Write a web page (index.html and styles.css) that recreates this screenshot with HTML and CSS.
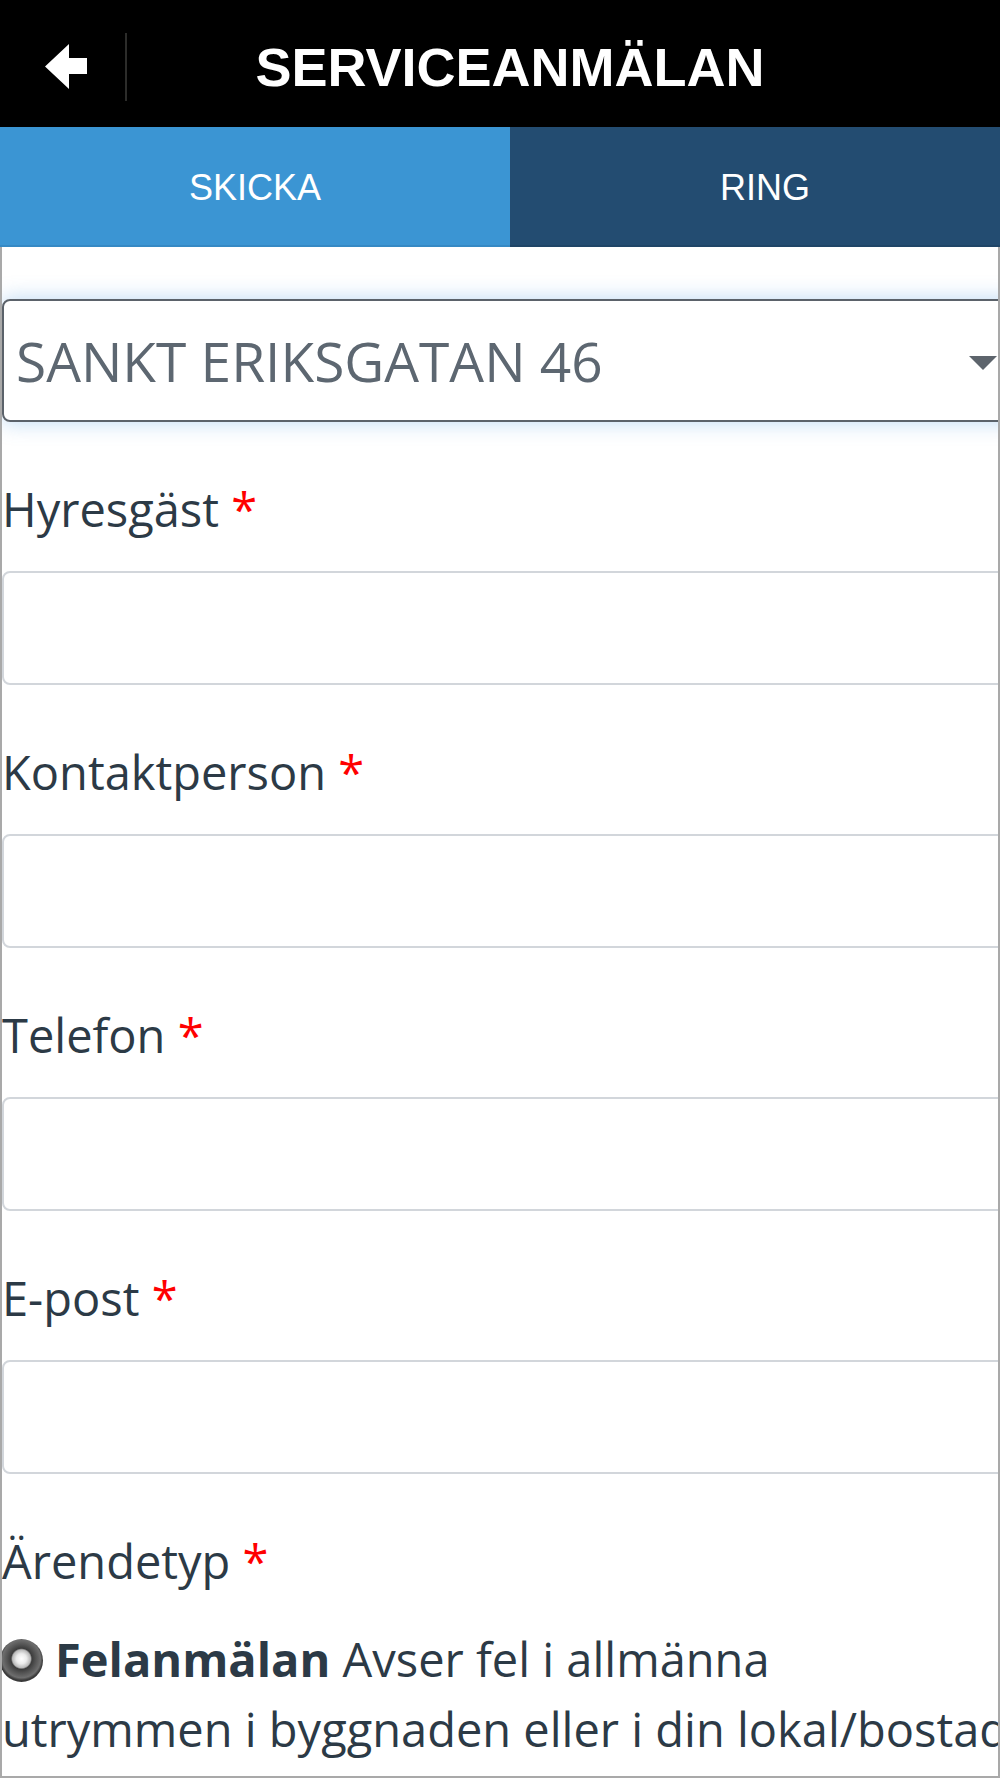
FILE: index.html
```html
<!DOCTYPE html>
<html lang="sv">
<head>
    <meta charset="UTF-8">
    <meta name="viewport" content="width=device-width, initial-scale=1.0">
    <title>Serviceanmälan</title>
    <link rel="stylesheet" href="styles.css">
</head>
<body>
<div class="screen">
    <header class="topbar">
        <div class="topbar-left">
            <a class="back" href="#">
                <svg width="42" height="45" viewBox="0 0 42 45">
                    <polygon points="0,22.5 24,0 24,14 42,14 42,30 24,30 24,45" fill="#fff"/>
                </svg>
            </a>
            <span class="divider"></span>
        </div>
        <h1>SERVICEANMÄLAN</h1>
        <div></div>
    </header>

    <nav class="tabs">
        <a class="tab active" href="#">SKICKA</a>
        <a class="tab" href="#">RING</a>
    </nav>

    <div class="webview">
        <form class="form">
            <!-- fastighet -->
            <div class="select">
                <span>SANKT ERIKSGATAN 46</span>
                <span class="caret"></span>
            </div>

            <div class="field">
                <label for="hyresgast">Hyresgäst <span class="req">*</span></label>
                <input type="text" id="hyresgast">
            </div>
            <div class="field">
                <label for="kontakt">Kontaktperson <span class="req">*</span></label>
                <input type="text" id="kontakt">
            </div>
            <div class="field">
                <label for="telefon">Telefon <span class="req">*</span></label>
                <input type="tel" id="telefon">
            </div>
            <div class="field">
                <label for="epost">E-post <span class="req">*</span></label>
                <input type="email" id="epost">
            </div>

            <div class="field">
                <label>Ärendetyp <span class="req">*</span></label>
                <p class="option"><span class="radio"></span><b>Felanmälan</b> Avser fel i allmänna utrymmen i byggnaden eller i din <span class="nowrap">lokal/bostad</span></p>
            </div>
        </form>
    </div>
</div>
</body>
</html>
```

FILE: styles.css
```css
body {
    margin: 0;
    background-color: #fff;
}
.screen {
    width: 1000px;
    height: 1778px;
    overflow: hidden;
    display: flex;
    flex-direction: column;
}
/* Svart toppfält */
.topbar {
    flex: none;
    width: 1020px;
    height: 127px;
    box-sizing: border-box;
    padding-top: 6px;
    background-color: #000;
    display: grid;
    grid-template-columns: 1fr auto 1fr;
    align-items: center;
}
.topbar-left {
    display: flex;
    align-items: center;
    padding-left: 45px;
}
.back {
    display: flex;
}
.divider {
    width: 2px;
    height: 68px;
    margin-left: 38px;
    background-color: #2c2c2a;
}
.topbar h1 {
    margin: 0;
    color: #fff;
    font-family: "Liberation Sans", Arial, sans-serif;
    font-weight: bold;
    font-size: 54px;
    line-height: normal;
}
/* Flikar */
.tabs {
    flex: none;
    width: 1020px;
    height: 120px;
    display: flex;
}
.tab {
    flex: 1;
    display: flex;
    align-items: center;
    justify-content: center;
    box-sizing: border-box;
    padding-top: 4px;
    background-color: #234c71;
    border-bottom: 2px solid #1f4567;
    color: #fff;
    font-family: "Liberation Sans", Arial, sans-serif;
    font-size: 36px;
    text-decoration: none;
}
.tab.active {
    background-color: #3b95d3;
    border-bottom-color: #3589c4;
}
/* Formulärytan */
.webview {
    flex: 1;
    min-height: 0;
    box-sizing: border-box;
    border: 2px solid #a9a9a9;
    border-top: none;
    overflow: hidden;
    background-color: #fff;
}
.form {
    width: 1018px;
    padding-top: 52px;
    font-family: "Open Sans", "Noto Sans", sans-serif;
    color: #2c3a46;
}
.select {
    height: 123px;
    box-sizing: border-box;
    display: flex;
    align-items: center;
    justify-content: space-between;
    padding: 0 21px 0 12px;
    border: 2px solid #5b626a;
    border-radius: 8px;
    box-shadow: 0 0 20px 2px rgba(90, 160, 225, 0.35);
    color: #5d6771;
    font-size: 55px;
}
.caret {
    width: 0;
    height: 0;
    margin-top: 4px;
    border-left: 14px solid transparent;
    border-right: 14px solid transparent;
    border-top: 14px solid #5d646c;
}
.field {
    margin-top: 55px;
}
.field label {
    display: block;
    font-size: 47px;
    line-height: 64px;
}
.req {
    color: #ff0000;
}
.field input {
    display: block;
    width: 100%;
    height: 114px;
    box-sizing: border-box;
    margin: 30px 0 0;
    border: 2px solid #d2d6db;
    border-radius: 8px;
    background-color: #fff;
}
/* Radioknapp */
.option {
    width: 1010px;
    margin: 31px 0 0;
    font-size: 47px;
    line-height: 70px;
}
.option b {
    font-weight: bold;
}
.radio {
    display: inline-block;
    width: 43px;
    height: 43px;
    margin: 0 12px 0 -2px;
    vertical-align: -5px;
    border-radius: 50%;
    background: radial-gradient(circle at 50% 46%, #fff 0, #ececec 5px, #b9b9b9 9px, #3c3c3c 10.5px, #525252 14px, #6e6e6e 19px, #3a3a3a 21.5px);
}
.nowrap {
    white-space: nowrap;
}
```
